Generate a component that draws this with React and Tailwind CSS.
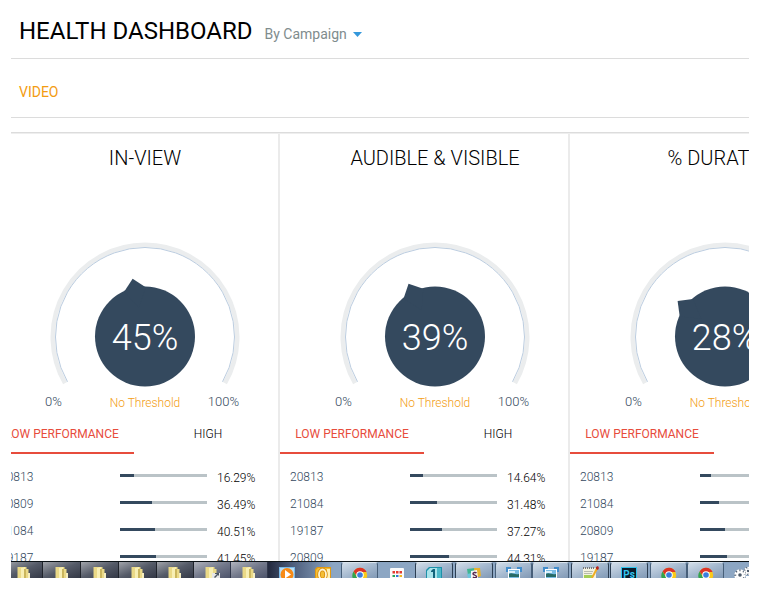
import React from "react";

const columns = [
  {
    title: "IN-VIEW",
    value: 45,
    rows: [
      ["20813", 16.29],
      ["20809", 36.49],
      ["21084", 40.51],
      ["19187", 41.45],
    ],
  },
  {
    title: "AUDIBLE & VISIBLE",
    value: 39,
    rows: [
      ["20813", 14.64],
      ["21084", 31.48],
      ["19187", 37.27],
      ["20809", 44.31],
    ],
  },
  {
    title: "% DURATION",
    value: 28,
    rows: [
      ["20813", 12.64],
      ["21084", 21.84],
      ["20809", 28.74],
      ["19187", 31.03],
    ],
  },
];

function Gauge({ value }) {
  // The scale sweeps 240 degrees, centred on twelve o'clock.
  const angle = -120 + (value / 100) * 240;
  return (
    <div className="relative h-[150px] w-[200px]">
      <svg viewBox="0 0 200 150" className="block h-full w-full" aria-hidden="true">
        <path d="M20.1 146.1 A92.2 92.2 0 1 1 179.9 146.1" fill="none" stroke="#ebedee" strokeWidth="4.6" />
        <path d="M22.5 144.75 A89.5 89.5 0 1 1 177.5 144.75" fill="none" stroke="#bccde0" strokeWidth="1" />
        <circle cx="100" cy="99.500" r="50" fill="#34495e" />
        <path d="M89 51.5 L100 40.5 L111 51.5 L100 70 Z" fill="#34495e" transform={`rotate(${angle} 100 100)`} />
      </svg>
      <span className="absolute inset-x-0 top-[81px] text-center text-[36px] leading-[40px] font-light text-white">
        {value}%
      </span>
    </div>
  );
}

function Column({ title, value, rows }) {
  return (
    <section className="w-[290px] shrink-0 border-r-2 border-[#ebebeb]">
      <div className="flex flex-col items-center pl-[22px]">
        <h2 className="pt-3 text-[20px] leading-6 font-light text-black">{title}</h2>
        <div className="h-[67px]" />
        <Gauge value={value} />
        <div className="grid h-7 w-[200px] grid-cols-[1fr_auto_1fr] items-center pt-0.5 font-light">
          <span className="text-[13px] text-[#34495e]">0%</span>
          <span className="pt-0.5 text-[12px] text-[#f39c12]">No Threshold</span>
          <span className="pr-1.5 text-right text-[13px] text-[#34495e]">100%</span>
        </div>
      </div>
      <div className="flex text-[12px]">
        <button className="h-[39px] w-36 border-b-2 border-[#e74c3c] text-center text-[#e74c3c]">LOW PERFORMANCE</button>
        <button className="h-[39px] w-36 border-b-2 border-transparent pl-1 text-center font-light text-black">HIGH</button>
      </div>
      <ul className="pt-[9px]">
        {rows.map(([name, pct]) => (
          <li key={name} className="flex h-[27px] items-center pl-2.5 text-[12px] font-light">
            <span className="w-[120px] text-[#34495e]">{name}</span>
            <span className="mb-0.5 block h-[3px] w-[87px] bg-[#bac3c7]">
              <span className="block h-full bg-[#34495e]" style={{ width: `${pct}%` }} />
            </span>
            <span className="pt-0.5 pl-2.5 text-black">{pct}%</span>
          </li>
        ))}
      </ul>
    </section>
  );
}

const icons = {
  folder: (
    <>
      <path d="M3.500 1h9v2h2v9h-11z" fill="#ead987" />
      <path d="M7 2l4-1v11H7z" fill="#f8efb4" />
      <path d="M10 3h2v9h-2z" fill="#cbb65d" />
      <path d="M14 7h2v5h-2z" fill="#f6eec0" />
    </>
  ),
  shortcut: (
    <>
      <path d="M3.500 1h9v2h2v9h-11z" fill="#ead987" />
      <path d="M7 2l4-1v11H7z" fill="#f8efb4" />
      <path d="M10 7h8v5h-8z" fill="#e7e7e7" />
      <path d="M12 11l3-3h-2V7h4v3l-1-1-3 3z" fill="#4b5663" />
    </>
  ),
  player: (
    <>
      <path d="M2 1h16v11H2z" fill="#79b9e8" />
      <path d="M3 2h14v10H3z" fill="#b9def6" />
      <circle cx="10" cy="8.500" r="6.5" fill="#f78a16" />
      <path d="M8 4l6 4.500-6 4z" fill="#fff" />
    </>
  ),
  outlook: (
    <>
      <path d="M4 1h14v11H2V3z" fill="#e39a10" />
      <path d="M5 2h12v10H3V4z" fill="#f4be35" />
      <path d="M14 3h3v9h-3z" fill="#fff1b6" />
      <ellipse cx="9.5" cy="8.5" rx="3.500" ry="5" fill="none" stroke="#d98d0c" strokeWidth="3.500" />
      <ellipse cx="9.5" cy="8.5" rx="3.500" ry="5" fill="none" stroke="#fff6d5" strokeWidth="1.800" />
    </>
  ),
  chrome: (
    <>
      <circle cx="10" cy="9" r="7.2" fill="#fbc918" />
      <path d="M3.6 5.6A7.2 7.2 0 0 1 16.6 6H10a3.4 3.4 0 0 0-3.2 4z" fill="#dc3427" />
      <path d="M3.6 5.6L7 11l2 2.5-2 3A7.2 7.2 0 0 1 3.6 5.6z" fill="#33a350" />
      <circle cx="10" cy="9" r="3.8" fill="#fff" />
      <circle cx="10" cy="9" r="2.8" fill="#3a7ede" />
    </>
  ),
  apps: (
    <>
      <rect x="3" y="2" width="14" height="13" rx="1" fill="#fbfbfb" />
      <path d="M5.500 5h2.500v2.500H5.500zM9 5h2.500v2.500H9zM12.500 5H15v2.500h-2.500z" fill="#e33b30" />
      <path d="M5.500 9h2.500v2H5.500z" fill="#26a456" />
      <path d="M9 9h2.500v2H9z" fill="#2f76d8" />
      <path d="M12.500 9H15v2h-2.500z" fill="#efb51c" />
    </>
  ),
  one: (
    <>
      <path d="M5 1h13v11H2V4z" fill="#1d91aa" />
      <path d="M6 2h11v10H3V5z" fill="#a9e3ea" />
      <path d="M13 2h4v10h-4z" fill="#4cb8c9" />
      <path d="M7 5l2-2h2v9H9V6H7z" fill="#12637c" />
    </>
  ),
  slack: (
    <>
      <path d="M3 3l8-1-2 5-5 2z" fill="#3fb592" />
      <path d="M10 2h6l1 8-5 2z" fill="#e9b22c" />
      <path d="M3 8l5-1 1 5H4z" fill="#6ec5dc" />
      <path d="M7 5l6-1 1 8H7z" fill="#f5f5f5" />
      <path d="M12.5 7c-1-1-3.5-.8-3.500.8s3.500 1 3.500 2.700-2.500 1.500-3.500.5" fill="none" stroke="#55284f" strokeWidth="1.500" />
    </>
  ),
  photo: (
    <>
      <path d="M2 1h5v2H4v3H2zM18 1h-5v2h3v3h2z" fill="#438dcb" />
      <path d="M4 3h12v9H4z" fill="#fff" />
      <path d="M5 4h10v8H5z" fill="#79bce4" />
      <path d="M5 8c3-2 5 1 10 0v3H5z" fill="#276b66" />
      <path d="M5 5h6v2H5z" fill="#d6effb" />
    </>
  ),
  notepad: (
    <>
      <path d="M3 2h13v10H3z" fill="#f3f2e1" />
      <path d="M3 1h1v2H3zM5 1h1v2H5zM7 1h1v2H7zM9 1h1v2H9zM11 1h1v2h-1zM13 1h1v2h-1z" fill="#777" />
      <path d="M4 5h9v1H4zM4 7h8v1H4z" fill="#b9bcae" />
      <path d="M4 9h9v3H4z" fill="#a4ce58" />
      <path d="M16 2l2 1-5 9h-2z" fill="#efad24" />
      <path d="M16 1l2-1 1 2-1 2-2-1z" fill="#b72720" />
    </>
  ),
  gear: (
    <>
      <circle cx="7" cy="9" r="5.500" fill="#4d5b6b" />
      <circle cx="15" cy="5" r="4" fill="#4d5b6b" />
      <circle cx="7" cy="9" r="4.500" fill="none" stroke="#fff" strokeWidth="2.500" strokeDasharray="2.400 1.130" />
      <circle cx="7" cy="9" r="2.800" fill="none" stroke="#fff" strokeWidth="2" />
      <circle cx="15" cy="5" r="3.300" fill="none" stroke="#fff" strokeWidth="1.800" strokeDasharray="1.800 1.100" />
      <circle cx="15" cy="5" r="1.900" fill="none" stroke="#fff" strokeWidth="1.500" />
      <path d="M13 10h6v2h-6z" fill="#fff" />
    </>
  ),
};

const dark = "w-[38px] border-r border-[#20242c] bg-linear-to-br from-[#a1a4aa] via-[#555b68] to-[#343947]";
const darkNarrow = "w-[37px] border-r border-[#20242c] bg-linear-to-br from-[#a1a4aa] via-[#555b68] to-[#343947]";
const steel = "w-[37px] border-r border-[#30374a] bg-linear-to-br from-[#b1b4bd] via-[#73798b] to-[#4d546b]";
const plain = "w-[37px]";
const glass =
  "w-[38px] rounded-t-[3px] border-x border-t border-x-[#2c3e52] border-t-[#dbe5ee] bg-linear-to-br from-[#d3dee9] via-[#a5b9cf] to-[#8199b5]";
const glassNarrow =
  "w-[37px] rounded-t-[3px] border-x border-t border-x-[#475f79] border-t-[#dbe5ee] bg-linear-to-br from-[#d3dee9] via-[#a5b9cf] to-[#8199b5]";

const tasks = [
  ["folder", dark],
  ["folder", dark],
  ["folder", dark],
  ["folder", dark],
  ["folder", darkNarrow],
  ["shortcut", steel],
  ["folder", steel],
  ["player", plain],
  ["outlook", "w-9"],
  ["chrome", glassNarrow],
  ["apps", plain],
  ["one", glass],
  ["slack", `${glass} ml-0.5`],
  ["photo", `${glassNarrow} ml-0.5`],
  ["photo", glassNarrow],
  ["notepad", `${glass} ml-0.5`],
  ["photoshop", `${glass} ml-px`],
  ["chrome", `${glassNarrow} ml-0.5`],
  ["chrome", glassNarrow],
  ["gear", plain],
];

function Taskbar() {
  return (
    <footer className="h-[17px] shrink-0 overflow-hidden border-t border-[#0b1216] bg-[linear-gradient(90deg,#22283a_0px,#242b40_258px,#4a5a78_280px,#8ca6c3_322px,#8ca6c3_100%)]">
      <nav aria-label="Taskbar" className="-ml-1.5 flex h-full">
        {tasks.map(([name, style], i) => (
          <button key={i} aria-label={name} className={`flex h-full shrink-0 items-end justify-center overflow-hidden ${style}`}>
            {name === "photoshop" ? (
              <span className="block h-[11px] w-4 overflow-hidden border-x border-t border-[#2fc4ee] bg-[#0b1c2c] pt-0.5 text-[10px] leading-[10px] font-bold text-[#31c5f0]">
                Ps
              </span>
            ) : (
              <svg viewBox="0 0 20 12" className="block h-3 w-5 shrink-0" aria-hidden="true">
                {icons[name]}
              </svg>
            )}
          </button>
        ))}
      </nav>
    </footer>
  );
}

export default function App() {
  return (
    <div className="flex h-screen flex-col overflow-hidden bg-white pr-[19px] pb-3 pl-[11px] font-[Roboto,'Liberation_Sans',sans-serif]">
      <header className="flex h-[59px] shrink-0 items-baseline gap-3 border-b border-[#dcdcdc] pt-4 pl-2">
        <h1 className="text-[24px] leading-[30px] text-black">HEALTH DASHBOARD</h1>
        <button className="flex items-center gap-1.5 text-[14px] leading-5 text-[#7f8c8d]">
          By Campaign
          <svg viewBox="0 0 9 5" className="h-[5px] w-[9px]" aria-hidden="true">
            <path d="M0 0h9L4.500 5z" fill="#3498db" />
          </svg>
        </button>
      </header>
      <nav className="flex h-[59px] shrink-0 items-center border-b border-[#dcdcdc] pt-2 pl-2">
        <a href="#video" className="text-[14px] leading-5 text-[#f39c12]">
          VIDEO
        </a>
      </nav>
      <main className="mt-3.5 min-h-0 flex-1 overflow-hidden border-t border-[#dcdcdc]">
        <div className="-ml-[21px] flex border-t border-[#eeeeee]">
          {columns.map((column) => (
            <Column key={column.title} {...column} />
          ))}
        </div>
      </main>
      <Taskbar />
    </div>
  );
}
